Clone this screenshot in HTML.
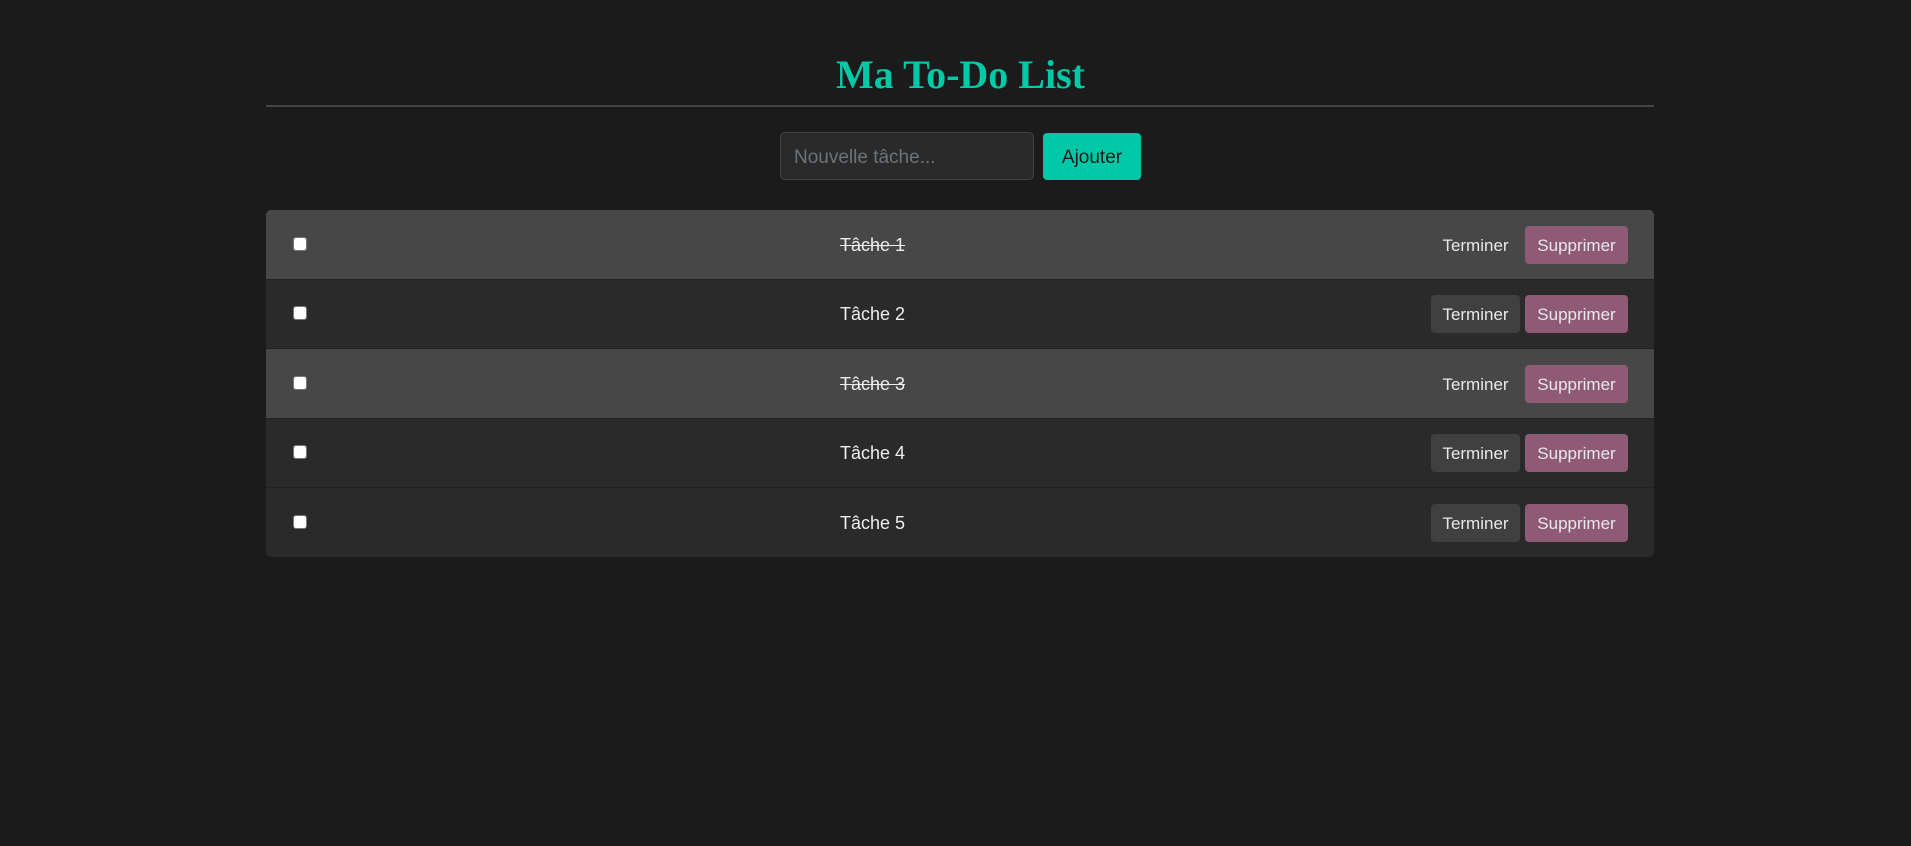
<!DOCTYPE html>
<html><head><meta charset="utf-8"><style>
body{margin:0;background:#1b1b1b;width:1911px;height:846px;position:relative;overflow:hidden;font-family:"Liberation Sans",sans-serif}
.a{position:absolute}
h1{position:absolute;left:5px;width:1911px;top:50px;margin:0;text-align:center;font:bold 40px "Liberation Serif",serif;color:#00c9a7;line-height:50px}
.hr{left:266px;width:1388px;top:105px;height:2px;background:#454545}
.inp{left:780px;top:132px;width:252px;height:46px;background:#2a2a2a;border:1px solid #444;border-radius:5px;color:#6c737a;font-size:19px;line-height:50px;text-indent:13px}
.add{left:1043px;top:133px;width:98px;height:47px;background:#00c8a6;border-radius:4px;color:#1a1a1a;font-size:19px;line-height:50px;text-align:center}
.list{left:266px;top:210px;width:1388px;height:347px;border-radius:5px;overflow:hidden;background:#2a2a2a}
.row{position:absolute;left:0;width:1388px;height:69px;border-bottom:1px solid #222}
.done{background:#474747}
.cb{position:absolute;left:27px;top:27px;width:12px;height:12px;background:#fff;border:1px solid #777;border-radius:3px}
.t{position:absolute;left:574px;top:1px;line-height:69px;color:#eee;font-size:18px}
.done .t{text-decoration:line-through}
.b{position:absolute;top:16px;height:38px;line-height:39px;border-radius:4px;color:#e8e8e8;font-size:17px;text-align:center}
.te{left:1165px;width:89px;background:#404040}
.done .te{background:transparent}
.su{left:1259px;width:103px;background:#8f5a75}
</style></head><body>
<h1>Ma To-Do List</h1>
<div class="a hr"></div>
<div class="a inp">Nouvelle tâche...</div>
<div class="a add">Ajouter</div>
<div class="a list">
<div class="row done" style="top:0"><div class="cb"></div><div class="t">Tâche 1</div><div class="b te">Terminer</div><div class="b su">Supprimer</div></div>
<div class="row" style="top:69px"><div class="cb"></div><div class="t">Tâche 2</div><div class="b te">Terminer</div><div class="b su">Supprimer</div></div>
<div class="row done" style="top:139px"><div class="cb"></div><div class="t">Tâche 3</div><div class="b te">Terminer</div><div class="b su">Supprimer</div></div>
<div class="row" style="top:208px"><div class="cb"></div><div class="t">Tâche 4</div><div class="b te">Terminer</div><div class="b su">Supprimer</div></div>
<div class="row" style="top:278px;border:0"><div class="cb"></div><div class="t">Tâche 5</div><div class="b te">Terminer</div><div class="b su">Supprimer</div></div>
</div>
</body></html>
